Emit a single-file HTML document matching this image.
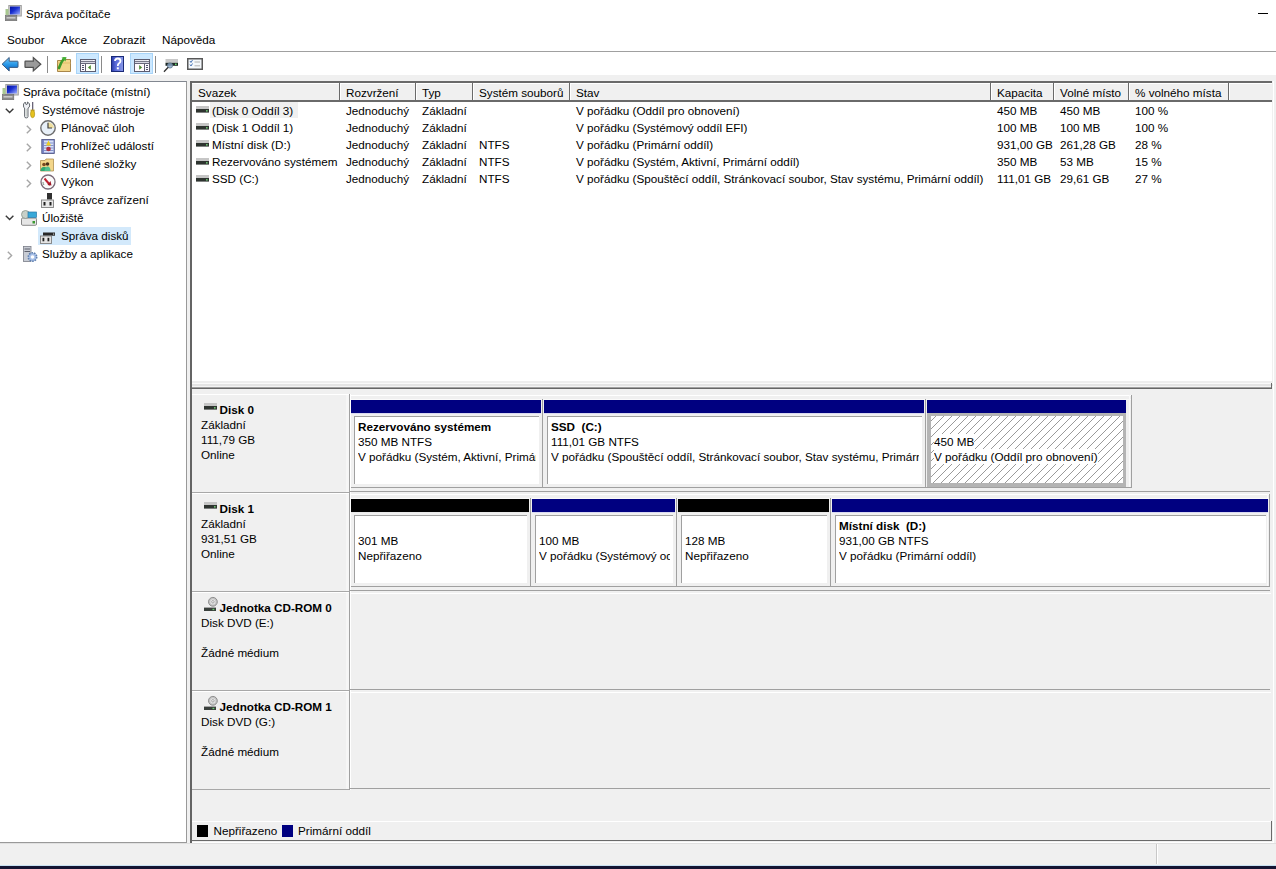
<!DOCTYPE html>
<html><head><meta charset="utf-8">
<style>
*{margin:0;padding:0;box-sizing:border-box}
html,body{width:1276px;height:869px;overflow:hidden}
body{background:#f0f0f0;font-family:"Liberation Sans",sans-serif;font-size:11.7px;color:#000;position:relative}
.a{position:absolute;white-space:nowrap;line-height:15px}
.b{position:absolute}
svg{position:absolute;overflow:visible}
</style></head><body>
<div class="b" style="left:0px;top:0px;width:1276px;height:75px;background:#fff"></div>
<svg style="left:5px;top:5px" width="17" height="17" viewBox="0 0 17 17"><rect x="3.8" y="0.5" width="12.5" height="10.5" fill="#d0d0d0" stroke="#a0a0a0" stroke-width="1"/>
<defs><linearGradient id="gs" x1="0" y1="0" x2="1" y2="1"><stop offset="0" stop-color="#0010a0"/><stop offset="0.45" stop-color="#1a30d0"/><stop offset="1" stop-color="#a0b0ff"/></linearGradient></defs>
<rect x="5" y="1.5" width="10" height="8" fill="url(#gs)"/>
<rect x="0.5" y="4" width="3" height="6" fill="#a8c890"/>
<rect x="0.3" y="10.5" width="11.5" height="5.2" fill="#8a8a8a" stroke="#6a6a6a" stroke-width="0.6"/>
<rect x="1.5" y="12" width="9" height="1.6" fill="#c8c8c8"/></svg>
<div class="a" style="left:26px;top:6.05px">Správa počítače</div>
<div class="b" style="left:1258px;top:13px;width:10px;height:1px;background:#000"></div>
<div class="a" style="left:7px;top:32.35px">Soubor</div>
<div class="a" style="left:61px;top:32.35px">Akce</div>
<div class="a" style="left:103px;top:32.35px">Zobrazit</div>
<div class="a" style="left:162px;top:32.35px">Nápověda</div>
<div class="b" style="left:0px;top:51px;width:1276px;height:1px;background:#a0a0a0"></div>
<svg style="left:0px;top:55px" width="20" height="18" viewBox="0 0 20 18"><defs><linearGradient id="gb" x1="0" y1="0" x2="0" y2="1"><stop offset="0" stop-color="#7cc8f8"/><stop offset="0.5" stop-color="#2a9ae8"/><stop offset="1" stop-color="#0a60c0"/></linearGradient></defs>
<path d="M2.1 9.2 L9.2 2.5 L9.2 6.2 L17.5 6.2 Q18 6.2 18 6.8 L18 11.8 Q18 12.4 17.5 12.4 L9.2 12.4 L9.2 16 Z" fill="url(#gb)" stroke="#3a5a80" stroke-width="1" stroke-linejoin="miter"/></svg>
<svg style="left:22px;top:55px" width="20" height="18" viewBox="0 0 20 18"><path d="M18.8 9.2 L11.3 2.5 L11.3 6.2 L3.4 6.2 Q3 6.2 3 6.8 L3 11.8 Q3 12.4 3.4 12.4 L11.3 12.4 L11.3 16 Z" fill="#9a9a9a" stroke="#505050" stroke-width="1.2" stroke-linejoin="miter"/></svg>
<div class="b" style="left:47px;top:56px;width:1px;height:17px;background:#8a8a8a"></div>
<div class="b" style="left:101px;top:56px;width:1px;height:17px;background:#8a8a8a"></div>
<div class="b" style="left:155px;top:56px;width:1px;height:17px;background:#8a8a8a"></div>
<svg style="left:56px;top:56px" width="17" height="17" viewBox="0 0 17 17"><path d="M1.5 4.5 L6 4.5 L7 3.5 L14.5 3.5 L14.5 15.5 L1.5 15.5 Z" fill="#f3d68a" stroke="#a9864a" stroke-width="1"/>
<path d="M1.5 7 L14.5 7" stroke="#e0bd6a" stroke-width="1"/>
<path d="M3 12 Q5 6 8 2.5" stroke="#3c9a2a" stroke-width="2.6" fill="none" stroke-linecap="round"/>
<path d="M5.5 1.5 L10.5 1 L9.5 5.5 Z" fill="#45b035"/></svg>
<div class="b" style="left:76px;top:53px;width:23px;height:21px;background:#cce8ff;border:1px solid #a8d4f8"></div>
<svg style="left:80px;top:59px" width="16" height="13" viewBox="0 0 16 13"><rect x="0" y="0" width="16" height="13" fill="#5c5c70"/>
<rect x="1" y="1" width="14" height="1.2" fill="#e8e8f0"/>
<rect x="13" y="1" width="1" height="1" fill="#fff"/>
<rect x="1" y="3" width="14" height="1.1" fill="#d8d8e4"/><rect x="1" y="5" width="4" height="7" fill="#fbf8ff"/>
<rect x="6" y="5" width="9" height="7" fill="#fcfffa"/>
<rect x="2" y="6" width="2" height="1" fill="#50506a"/><rect x="2" y="8" width="2" height="1" fill="#50506a"/><rect x="2" y="10" width="2" height="1" fill="#50506a"/>
<path d="M7.9 8.4 L10.8 6 L10.8 10.8 Z" fill="#4a8a30"/></svg>
<svg style="left:111px;top:56px" width="13" height="16" viewBox="0 0 13 16"><defs><linearGradient id="gh" x1="0" y1="0" x2="1" y2="0"><stop offset="0" stop-color="#2a3aa8"/><stop offset="0.35" stop-color="#5a6ad8"/><stop offset="1" stop-color="#8a9ae8"/></linearGradient></defs>
<rect x="0.5" y="0.5" width="12" height="15" fill="url(#gh)" stroke="#1a2a78" stroke-width="1"/>
<path d="M4 5 Q4 2.5 6.8 2.5 Q9.5 2.5 9.5 5 Q9.5 6.5 7.8 7.5 Q6.8 8.2 6.8 10" stroke="#fff" stroke-width="1.8" fill="none"/>
<rect x="5.8" y="11.3" width="2" height="2" fill="#fff"/></svg>
<div class="b" style="left:130px;top:53px;width:23px;height:21px;background:#cce8ff;border:1px solid #a8d4f8"></div>
<svg style="left:134px;top:59px" width="16" height="13" viewBox="0 0 16 13"><rect x="0" y="0" width="16" height="13" fill="#5c5c70"/>
<rect x="1" y="1" width="14" height="1.2" fill="#e8e8f0"/>
<rect x="13" y="1" width="1" height="1" fill="#fff"/>
<rect x="1" y="3" width="14" height="1.1" fill="#d8d8e4"/><rect x="1" y="5" width="9" height="7" fill="#fffafc"/>
<rect x="11" y="5" width="4" height="7" fill="#fbf8ff"/>
<rect x="12" y="6" width="2" height="1" fill="#50506a"/><rect x="12" y="8" width="2" height="1" fill="#50506a"/><rect x="12" y="10" width="2" height="1" fill="#50506a"/>
<path d="M8.1 8.4 L5.2 6 L5.2 10.8 Z" fill="#4a8a30"/></svg>
<svg style="left:163px;top:58px" width="17" height="15" viewBox="0 0 17 15"><rect x="2.5" y="1" width="12.5" height="3.8" fill="#c8c8c8"/>
<rect x="2.5" y="4.8" width="12.5" height="3" fill="#1e2a26"/>
<rect x="12" y="5.6" width="1.6" height="1.4" fill="#6ae070"/>
<circle cx="7" cy="7.5" r="2.6" fill="#8aa8c8" fill-opacity="0.8" stroke="#607890" stroke-width="0.8"/>
<path d="M5.2 9.3 L1 13.8" stroke="#303030" stroke-width="1.3"/></svg>
<svg style="left:187px;top:58px" width="16" height="12" viewBox="0 0 16 12"><rect x="0.75" y="0.75" width="14.5" height="10.5" fill="#f4f8fc" stroke="#585858" stroke-width="1.5"/>
<path d="M3 3 L4 4.5 L5.5 2" stroke="#3a6ab0" stroke-width="0.9" fill="none"/>
<path d="M3 6.5 L4 8 L5.5 5.5" stroke="#3a6ab0" stroke-width="0.9" fill="none"/>
<path d="M7.5 4 L13 4 M7.5 7.8 L13 7.8" stroke="#a0a0a0" stroke-width="0.8"/></svg>
<div class="b" style="left:0px;top:81px;width:187px;height:762px;background:#fff;border-top:1px solid #828790;border-right:1px solid #999;border-bottom:1px solid #999"></div>
<div class="b" style="left:38px;top:227px;width:93px;height:18px;background:#d3e9fb"></div>
<svg style="left:2px;top:84px" width="17" height="17" viewBox="0 0 17 17"><rect x="3.8" y="0.5" width="12.5" height="10.5" fill="#d0d0d0" stroke="#a0a0a0" stroke-width="1"/>
<defs><linearGradient id="gs" x1="0" y1="0" x2="1" y2="1"><stop offset="0" stop-color="#0010a0"/><stop offset="0.45" stop-color="#1a30d0"/><stop offset="1" stop-color="#a0b0ff"/></linearGradient></defs>
<rect x="5" y="1.5" width="10" height="8" fill="url(#gs)"/>
<rect x="0.5" y="4" width="3" height="6" fill="#a8c890"/>
<rect x="0.3" y="10.5" width="11.5" height="5.2" fill="#8a8a8a" stroke="#6a6a6a" stroke-width="0.6"/>
<rect x="1.5" y="12" width="9" height="1.6" fill="#c8c8c8"/></svg>
<svg style="left:5px;top:108px" width="10" height="6" viewBox="0 0 10 6"><path d="M0.8 0.8 L4.6 4.6 L8.4 0.8" stroke="#3a3a3a" stroke-width="1.4" fill="none"/></svg>
<svg style="left:20px;top:100px" width="20" height="20" viewBox="0 0 20 20"><path d="M3.6 7.2 Q2.6 3.4 5.2 2.1 L6.1 4.6 L7.6 3.8 L7.3 2 Q10.2 3 9.7 6 Q9.3 7.6 8 8.1 L8 16.6 Q8 17.9 6.3 17.9 Q4.6 17.9 4.6 16.6 L4.6 8.1 Q3.9 7.7 3.6 7.2 Z" fill="#eef0f4" stroke="#555a60" stroke-width="0.9"/>
<path d="M6.3 9 L6.3 16.5" stroke="#c8d0c8" stroke-width="1"/>
<rect x="12" y="2" width="1.3" height="8" fill="#6a6478"/>
<rect x="10.6" y="9.6" width="4" height="1.6" fill="#b89a28"/>
<ellipse cx="12.6" cy="14" rx="2.1" ry="3.7" fill="#e6c21e" stroke="#a88a10" stroke-width="0.6"/></svg>
<svg style="left:26px;top:125px" width="6" height="10" viewBox="0 0 6 10"><path d="M0.8 0.8 L4.6 4.5 L0.8 8.2" stroke="#a6a6a6" stroke-width="1.4" fill="none"/></svg>
<svg style="left:40px;top:120px" width="16" height="16" viewBox="0 0 16 16"><circle cx="8" cy="8" r="7.2" fill="#e8f0f8" stroke="#6e6e6e" stroke-width="1.4"/>
<path d="M8 8 L8 2.2 A5.8 5.8 0 0 1 13.8 8 Z" fill="#f0e0a0"/>
<path d="M8 2.8 L8 8 L12 8" stroke="#404040" stroke-width="1.2" fill="none"/></svg>
<svg style="left:26px;top:143px" width="6" height="10" viewBox="0 0 6 10"><path d="M0.8 0.8 L4.6 4.5 L0.8 8.2" stroke="#a6a6a6" stroke-width="1.4" fill="none"/></svg>
<svg style="left:41px;top:139px" width="14" height="15" viewBox="0 0 14 15"><rect x="0.8" y="0.5" width="12.5" height="14" fill="#7a86c8" stroke="#4a5080" stroke-width="0.8"/>
<rect x="3" y="1.5" width="9.5" height="12" fill="#d8e0f8"/>
<path d="M3 4 L12.5 4 M3 6.5 L12.5 6.5 M3 9 L12.5 9 M3 11.5 L12.5 11.5" stroke="#7080c0" stroke-width="0.8"/>
<path d="M7.5 1.5 L10 6.5 L5 6.5 Z" fill="#f0d020"/>
<circle cx="7.5" cy="10" r="2.3" fill="#b03040"/></svg>
<svg style="left:26px;top:161px" width="6" height="10" viewBox="0 0 6 10"><path d="M0.8 0.8 L4.6 4.5 L0.8 8.2" stroke="#a6a6a6" stroke-width="1.4" fill="none"/></svg>
<svg style="left:40px;top:158px" width="14" height="14" viewBox="0 0 14 14"><path d="M0.5 2.5 L5 2.5 L6 1 L13.5 1 L13.5 13 L0.5 13 Z" fill="#f3d68a" stroke="#b09050" stroke-width="0.8"/>
<circle cx="4" cy="6.5" r="1.8" fill="#7a4a20"/><circle cx="7.5" cy="6" r="1.8" fill="#4a3018"/>
<path d="M0.5 13 Q1 8.5 4 9 Q7 8.5 7.5 13 Z" fill="#30a870"/><path d="M4.5 13 Q5 8.5 8 8.5 Q10.5 9 10.5 13 Z" fill="#50c090"/></svg>
<svg style="left:26px;top:179px" width="6" height="10" viewBox="0 0 6 10"><path d="M0.8 0.8 L4.6 4.5 L0.8 8.2" stroke="#a6a6a6" stroke-width="1.4" fill="none"/></svg>
<svg style="left:40px;top:174px" width="16" height="16" viewBox="0 0 16 16"><circle cx="8" cy="8" r="7" fill="#fafafa" stroke="#7a6a78" stroke-width="1.3"/>
<path d="M4.5 4.5 L10 11" stroke="#c02030" stroke-width="2"/><path d="M10.5 7 L11.5 11.5 L7.5 11" fill="#a01828"/>
<path d="M3 8 Q3 10 4 11" stroke="#607060" stroke-width="0.8" fill="none"/></svg>
<svg style="left:41px;top:193px" width="13" height="15" viewBox="0 0 13 15"><rect x="6" y="0" width="5" height="6.5" fill="#303030"/>
<rect x="0.5" y="7" width="12" height="7.5" fill="#e8e8e8" stroke="#808080" stroke-width="0.9"/>
<rect x="2.5" y="9" width="2" height="3.5" fill="#202020"/><rect x="8.5" y="9" width="2" height="3.5" fill="#202020"/></svg>
<svg style="left:5px;top:215px" width="10" height="6" viewBox="0 0 10 6"><path d="M0.8 0.8 L4.6 4.6 L8.4 0.8" stroke="#3a3a3a" stroke-width="1.4" fill="none"/></svg>
<svg style="left:21px;top:210px" width="16" height="16" viewBox="0 0 16 16"><rect x="0.5" y="8" width="15" height="7.3" rx="1.2" fill="#e6e6e6" stroke="#7a7a7a" stroke-width="0.9"/>
<rect x="11.5" y="11" width="2.5" height="2.5" fill="#3a9a30"/>
<circle cx="4.5" cy="4.5" r="4" fill="#c8d0c8" stroke="#8a948a" stroke-width="0.8"/>
<rect x="7" y="2" width="8.5" height="5.5" fill="#38a8d8" stroke="#2a78a8" stroke-width="0.7"/></svg>
<svg style="left:40px;top:232px" width="16" height="12" viewBox="0 0 16 12"><rect x="3" y="0.5" width="12" height="3.2" fill="#282828"/>
<rect x="13" y="1.5" width="1.2" height="1.2" fill="#c0c0c0"/>
<rect x="0.5" y="4" width="11" height="7.5" fill="#e4e4e4" stroke="#808080" stroke-width="0.9"/>
<rect x="2.5" y="5.8" width="1.8" height="3.5" fill="#202020"/><rect x="7.5" y="5.8" width="1.8" height="3.5" fill="#202020"/></svg>
<svg style="left:7px;top:251px" width="6" height="10" viewBox="0 0 6 10"><path d="M0.8 0.8 L4.6 4.5 L0.8 8.2" stroke="#a6a6a6" stroke-width="1.4" fill="none"/></svg>
<svg style="left:23px;top:246px" width="15" height="16" viewBox="0 0 15 16"><rect x="0.5" y="0.5" width="7.5" height="15" fill="#c8ccd4" stroke="#7a7e88" stroke-width="0.8"/>
<path d="M1.5 3 L7 3 M1.5 5.5 L7 5.5" stroke="#505460" stroke-width="0.9"/>
<circle cx="9.5" cy="11" r="4.2" fill="#a8c0e8" stroke="#6080b0" stroke-width="1.6" stroke-dasharray="1.6 1"/>
<circle cx="9.5" cy="11" r="1.8" fill="#fff"/></svg>
<div class="a" style="left:23px;top:84.05px">Správa počítače (místní)</div>
<div class="a" style="left:42px;top:102.05px">Systémové nástroje</div>
<div class="a" style="left:61px;top:120.05px">Plánovač úloh</div>
<div class="a" style="left:61px;top:138.05px">Prohlížeč událostí</div>
<div class="a" style="left:61px;top:156.05px">Sdílené složky</div>
<div class="a" style="left:61px;top:174.05px">Výkon</div>
<div class="a" style="left:61px;top:192.05px">Správce zařízení</div>
<div class="a" style="left:42px;top:210.05px">Úložiště</div>
<div class="a" style="left:61px;top:228.05px">Správa disků</div>
<div class="a" style="left:42px;top:246.05px">Služby a aplikace</div>
<div class="b" style="left:190px;top:81px;width:2px;height:762px;background:#646464"></div>
<div class="b" style="left:192px;top:82px;width:1080px;height:299px;background:#fff"></div>
<div class="b" style="left:192px;top:83px;width:1080px;height:17px;background:#f0f0f0"></div>
<div class="b" style="left:192px;top:81px;width:1080px;height:2px;background:#6a6a6a"></div>
<div class="b" style="left:192px;top:83px;width:1080px;height:1px;background:#fff"></div>
<div class="b" style="left:192px;top:100px;width:1080px;height:2px;background:#6a6a6a"></div>
<div class="b" style="left:339px;top:83px;width:1px;height:17px;background:#6a6a6a"></div>
<div class="b" style="left:340px;top:83px;width:1px;height:17px;background:#fff"></div>
<div class="b" style="left:415px;top:83px;width:1px;height:17px;background:#6a6a6a"></div>
<div class="b" style="left:416px;top:83px;width:1px;height:17px;background:#fff"></div>
<div class="b" style="left:472px;top:83px;width:1px;height:17px;background:#6a6a6a"></div>
<div class="b" style="left:473px;top:83px;width:1px;height:17px;background:#fff"></div>
<div class="b" style="left:569px;top:83px;width:1px;height:17px;background:#6a6a6a"></div>
<div class="b" style="left:570px;top:83px;width:1px;height:17px;background:#fff"></div>
<div class="b" style="left:990px;top:83px;width:1px;height:17px;background:#6a6a6a"></div>
<div class="b" style="left:991px;top:83px;width:1px;height:17px;background:#fff"></div>
<div class="b" style="left:1053px;top:83px;width:1px;height:17px;background:#6a6a6a"></div>
<div class="b" style="left:1054px;top:83px;width:1px;height:17px;background:#fff"></div>
<div class="b" style="left:1128px;top:83px;width:1px;height:17px;background:#6a6a6a"></div>
<div class="b" style="left:1129px;top:83px;width:1px;height:17px;background:#fff"></div>
<div class="b" style="left:1228px;top:83px;width:1px;height:17px;background:#6a6a6a"></div>
<div class="b" style="left:1229px;top:83px;width:1px;height:17px;background:#fff"></div>
<div class="a" style="left:198px;top:85.05px">Svazek</div>
<div class="a" style="left:346px;top:85.05px">Rozvržení</div>
<div class="a" style="left:422px;top:85.05px">Typ</div>
<div class="a" style="left:479px;top:85.05px">Systém souborů</div>
<div class="a" style="left:576px;top:85.05px">Stav</div>
<div class="a" style="left:997px;top:85.05px">Kapacita</div>
<div class="a" style="left:1060px;top:85.05px">Volné místo</div>
<div class="a" style="left:1135px;top:85.05px">% volného místa</div>
<div class="b" style="left:210px;top:102px;width:88px;height:16px;background:#f0f0f0"></div>
<svg style="left:196px;top:106px" width="13" height="7" viewBox="0 0 13 7"><rect x="0" y="0" width="13" height="3" fill="#c6c6c6"/>
<rect x="0" y="3" width="13" height="3.6" fill="#2e3430"/>
<rect x="10" y="4.2" width="1.6" height="1.3" fill="#7ae080"/></svg>
<div class="a" style="left:212px;top:103.05px">(Disk 0 Oddíl 3)</div>
<div class="a" style="left:346px;top:103.05px">Jednoduchý</div>
<div class="a" style="left:422px;top:103.05px">Základní</div>
<div class="a" style="left:576px;top:103.05px">V pořádku (Oddíl pro obnovení)</div>
<div class="a" style="left:997px;top:103.05px">450 MB</div>
<div class="a" style="left:1060px;top:103.05px">450 MB</div>
<div class="a" style="left:1135px;top:103.05px">100 %</div>
<svg style="left:196px;top:123px" width="13" height="7" viewBox="0 0 13 7"><rect x="0" y="0" width="13" height="3" fill="#c6c6c6"/>
<rect x="0" y="3" width="13" height="3.6" fill="#2e3430"/>
<rect x="10" y="4.2" width="1.6" height="1.3" fill="#7ae080"/></svg>
<div class="a" style="left:212px;top:120.15px">(Disk 1 Oddíl 1)</div>
<div class="a" style="left:346px;top:120.15px">Jednoduchý</div>
<div class="a" style="left:422px;top:120.15px">Základní</div>
<div class="a" style="left:576px;top:120.15px">V pořádku (Systémový oddíl EFI)</div>
<div class="a" style="left:997px;top:120.15px">100 MB</div>
<div class="a" style="left:1060px;top:120.15px">100 MB</div>
<div class="a" style="left:1135px;top:120.15px">100 %</div>
<svg style="left:196px;top:140px" width="13" height="7" viewBox="0 0 13 7"><rect x="0" y="0" width="13" height="3" fill="#c6c6c6"/>
<rect x="0" y="3" width="13" height="3.6" fill="#2e3430"/>
<rect x="10" y="4.2" width="1.6" height="1.3" fill="#7ae080"/></svg>
<div class="a" style="left:212px;top:137.25px">Místní disk (D:)</div>
<div class="a" style="left:346px;top:137.25px">Jednoduchý</div>
<div class="a" style="left:422px;top:137.25px">Základní</div>
<div class="a" style="left:479px;top:137.25px">NTFS</div>
<div class="a" style="left:576px;top:137.25px">V pořádku (Primární oddíl)</div>
<div class="a" style="left:997px;top:137.25px">931,00 GB</div>
<div class="a" style="left:1060px;top:137.25px">261,28 GB</div>
<div class="a" style="left:1135px;top:137.25px">28 %</div>
<svg style="left:196px;top:158px" width="13" height="7" viewBox="0 0 13 7"><rect x="0" y="0" width="13" height="3" fill="#c6c6c6"/>
<rect x="0" y="3" width="13" height="3.6" fill="#2e3430"/>
<rect x="10" y="4.2" width="1.6" height="1.3" fill="#7ae080"/></svg>
<div class="a" style="left:212px;top:154.35px">Rezervováno systémem</div>
<div class="a" style="left:346px;top:154.35px">Jednoduchý</div>
<div class="a" style="left:422px;top:154.35px">Základní</div>
<div class="a" style="left:479px;top:154.35px">NTFS</div>
<div class="a" style="left:576px;top:154.35px">V pořádku (Systém, Aktivní, Primární oddíl)</div>
<div class="a" style="left:997px;top:154.35px">350 MB</div>
<div class="a" style="left:1060px;top:154.35px">53 MB</div>
<div class="a" style="left:1135px;top:154.35px">15 %</div>
<svg style="left:196px;top:175px" width="13" height="7" viewBox="0 0 13 7"><rect x="0" y="0" width="13" height="3" fill="#c6c6c6"/>
<rect x="0" y="3" width="13" height="3.6" fill="#2e3430"/>
<rect x="10" y="4.2" width="1.6" height="1.3" fill="#7ae080"/></svg>
<div class="a" style="left:212px;top:171.45px">SSD (C:)</div>
<div class="a" style="left:346px;top:171.45px">Jednoduchý</div>
<div class="a" style="left:422px;top:171.45px">Základní</div>
<div class="a" style="left:479px;top:171.45px">NTFS</div>
<div class="a" style="left:576px;top:171.45px">V pořádku (Spouštěcí oddíl, Stránkovací soubor, Stav systému, Primární oddíl)</div>
<div class="a" style="left:997px;top:171.45px">111,01 GB</div>
<div class="a" style="left:1060px;top:171.45px">29,61 GB</div>
<div class="a" style="left:1135px;top:171.45px">27 %</div>
<div class="b" style="left:192px;top:381px;width:1081px;height:2px;background:#eeeeee"></div>
<div class="b" style="left:192px;top:383px;width:1081px;height:1px;background:#fafafa"></div>
<div class="b" style="left:192px;top:384px;width:1081px;height:2px;background:#e4e4e4"></div>
<div class="b" style="left:192px;top:386px;width:1081px;height:1px;background:#f4f4f4"></div>
<div class="b" style="left:192px;top:388px;width:1080px;height:1px;background:#666666"></div>
<div class="b" style="left:192px;top:387px;width:1080px;height:1px;background:#a0a0a0"></div>
<div class="b" style="left:1271px;top:383px;width:1px;height:5px;background:#6a6a6a"></div>
<div class="b" style="left:192px;top:394px;width:157px;height:1px;background:#fff"></div>
<div class="b" style="left:192px;top:492px;width:157px;height:1px;background:#a8a8a8"></div>
<div class="b" style="left:346px;top:395px;width:3px;height:97px;background:#f6f6f6"></div>
<div class="b" style="left:349px;top:394px;width:1px;height:99px;background:#a0a0a0"></div>
<div class="b" style="left:350px;top:394px;width:1px;height:99px;background:#fff"></div>
<div class="b" style="left:351px;top:395px;width:780px;height:1px;background:#fff"></div>
<div class="b" style="left:351px;top:399px;width:780px;height:1px;background:#fafafa"></div>
<div class="b" style="left:351px;top:487px;width:780px;height:1px;background:#a0a0a0"></div>
<div class="b" style="left:1131px;top:395px;width:1px;height:93px;background:#a0a0a0"></div>
<div class="b" style="left:1129px;top:395px;width:1px;height:92px;background:#fafafa"></div>
<div class="b" style="left:351px;top:400px;width:190px;height:13px;background:#000080"></div>
<div class="b" style="left:351px;top:413px;width:190px;height:1px;background:#d8d8f0"></div>
<div class="b" style="left:354px;top:416px;width:185px;height:68px;background:#fff;border-top:1px solid #a0a0a0;border-left:1px solid #a0a0a0"></div>
<div class="a" style="left:358px;top:418.95px;font-weight:bold;max-width:178px;overflow:hidden">Rezervováno systémem</div>
<div class="a" style="left:358px;top:433.95px;max-width:178px;overflow:hidden">350 MB NTFS</div>
<div class="a" style="left:358px;top:448.95px;max-width:178px;overflow:hidden">V pořádku (Systém, Aktivní, Primární oddíl)</div>
<div class="b" style="left:542px;top:399px;width:1px;height:89px;background:#a0a0a0"></div>
<div class="b" style="left:544px;top:400px;width:380px;height:13px;background:#000080"></div>
<div class="b" style="left:544px;top:413px;width:380px;height:1px;background:#d8d8f0"></div>
<div class="b" style="left:547px;top:416px;width:375px;height:68px;background:#fff;border-top:1px solid #a0a0a0;border-left:1px solid #a0a0a0"></div>
<div class="a" style="left:551px;top:418.95px;font-weight:bold;max-width:368px;overflow:hidden">SSD&nbsp; (C:)</div>
<div class="a" style="left:551px;top:433.95px;max-width:368px;overflow:hidden">111,01 GB NTFS</div>
<div class="a" style="left:551px;top:448.95px;max-width:368px;overflow:hidden">V pořádku (Spouštěcí oddíl, Stránkovací soubor, Stav systému, Primární oddíl)</div>
<div class="b" style="left:925px;top:399px;width:1px;height:89px;background:#a0a0a0"></div>
<div class="b" style="left:927px;top:400px;width:199px;height:13px;background:#000080"></div>
<div class="b" style="left:927px;top:413px;width:199px;height:1px;background:#d8d8f0"></div>
<div class="b" style="left:927px;top:413px;width:199px;height:74px;background:#b4b4b4"></div>
<svg style="left:931px;top:416px" width="192" height="67"><defs><pattern id="hp" width="8" height="8" patternUnits="userSpaceOnUse" x="5" y="0"><path d="M-1 9 L9 -1" stroke="#9a9a9a" stroke-width="1"/></pattern></defs><rect width="192" height="67" fill="#fff"/><rect width="192" height="67" fill="url(#hp)"/></svg>
<div class="a" style="left:934px;top:433.95px;max-width:187px;overflow:hidden;background:#fff">450 MB</div>
<div class="a" style="left:934px;top:448.95px;max-width:187px;overflow:hidden;background:#fff">V pořádku (Oddíl pro obnovení)</div>
<div class="b" style="left:192px;top:493px;width:157px;height:1px;background:#fff"></div>
<div class="b" style="left:192px;top:591px;width:157px;height:1px;background:#a8a8a8"></div>
<div class="b" style="left:346px;top:494px;width:3px;height:97px;background:#f6f6f6"></div>
<div class="b" style="left:349px;top:493px;width:1px;height:99px;background:#a0a0a0"></div>
<div class="b" style="left:350px;top:493px;width:1px;height:99px;background:#fff"></div>
<div class="b" style="left:350px;top:491px;width:920px;height:1px;background:#a0a0a0"></div>
<div class="b" style="left:351px;top:494px;width:918px;height:1px;background:#fff"></div>
<div class="b" style="left:351px;top:498px;width:918px;height:1px;background:#fafafa"></div>
<div class="b" style="left:351px;top:586px;width:918px;height:1px;background:#a0a0a0"></div>
<div class="b" style="left:1269px;top:494px;width:1px;height:93px;background:#a0a0a0"></div>
<div class="b" style="left:1267px;top:494px;width:1px;height:92px;background:#fafafa"></div>
<div class="b" style="left:351px;top:499px;width:178px;height:13px;background:#000"></div>
<div class="b" style="left:351px;top:512px;width:178px;height:1px;background:#e8e8e8"></div>
<div class="b" style="left:354px;top:515px;width:173px;height:68px;background:#fff;border-top:1px solid #a0a0a0;border-left:1px solid #a0a0a0"></div>
<div class="a" style="left:358px;top:532.95px;max-width:166px;overflow:hidden">301 MB</div>
<div class="a" style="left:358px;top:547.95px;max-width:166px;overflow:hidden">Nepřiřazeno</div>
<div class="b" style="left:530px;top:498px;width:1px;height:89px;background:#a0a0a0"></div>
<div class="b" style="left:532px;top:499px;width:143px;height:13px;background:#000080"></div>
<div class="b" style="left:532px;top:512px;width:143px;height:1px;background:#d8d8f0"></div>
<div class="b" style="left:535px;top:515px;width:138px;height:68px;background:#fff;border-top:1px solid #a0a0a0;border-left:1px solid #a0a0a0"></div>
<div class="a" style="left:539px;top:532.95px;max-width:131px;overflow:hidden">100 MB</div>
<div class="a" style="left:539px;top:547.95px;max-width:131px;overflow:hidden">V pořádku (Systémový oddíl EFI)</div>
<div class="b" style="left:676px;top:498px;width:1px;height:89px;background:#a0a0a0"></div>
<div class="b" style="left:678px;top:499px;width:151px;height:13px;background:#000"></div>
<div class="b" style="left:678px;top:512px;width:151px;height:1px;background:#e8e8e8"></div>
<div class="b" style="left:681px;top:515px;width:146px;height:68px;background:#fff;border-top:1px solid #a0a0a0;border-left:1px solid #a0a0a0"></div>
<div class="a" style="left:685px;top:532.95px;max-width:139px;overflow:hidden">128 MB</div>
<div class="a" style="left:685px;top:547.95px;max-width:139px;overflow:hidden">Nepřiřazeno</div>
<div class="b" style="left:830px;top:498px;width:1px;height:89px;background:#a0a0a0"></div>
<div class="b" style="left:832px;top:499px;width:436px;height:13px;background:#000080"></div>
<div class="b" style="left:832px;top:512px;width:436px;height:1px;background:#d8d8f0"></div>
<div class="b" style="left:835px;top:515px;width:431px;height:68px;background:#fff;border-top:1px solid #a0a0a0;border-left:1px solid #a0a0a0"></div>
<div class="a" style="left:839px;top:517.95px;font-weight:bold;max-width:424px;overflow:hidden">Místní disk&nbsp; (D:)</div>
<div class="a" style="left:839px;top:532.95px;max-width:424px;overflow:hidden">931,00 GB NTFS</div>
<div class="a" style="left:839px;top:547.95px;max-width:424px;overflow:hidden">V pořádku (Primární oddíl)</div>
<div class="b" style="left:192px;top:592px;width:157px;height:1px;background:#fff"></div>
<div class="b" style="left:192px;top:690px;width:157px;height:1px;background:#a8a8a8"></div>
<div class="b" style="left:346px;top:593px;width:3px;height:97px;background:#f6f6f6"></div>
<div class="b" style="left:349px;top:592px;width:1px;height:99px;background:#a0a0a0"></div>
<div class="b" style="left:350px;top:592px;width:1px;height:99px;background:#fff"></div>
<div class="b" style="left:350px;top:590px;width:920px;height:1px;background:#a0a0a0"></div>
<div class="b" style="left:351px;top:593px;width:920px;height:1px;background:#fff"></div>
<div class="b" style="left:192px;top:691px;width:157px;height:1px;background:#fff"></div>
<div class="b" style="left:192px;top:789px;width:157px;height:1px;background:#a8a8a8"></div>
<div class="b" style="left:346px;top:692px;width:3px;height:97px;background:#f6f6f6"></div>
<div class="b" style="left:349px;top:691px;width:1px;height:99px;background:#a0a0a0"></div>
<div class="b" style="left:350px;top:691px;width:1px;height:99px;background:#fff"></div>
<div class="b" style="left:350px;top:689px;width:920px;height:1px;background:#a0a0a0"></div>
<div class="b" style="left:351px;top:692px;width:920px;height:1px;background:#fff"></div>
<div class="b" style="left:350px;top:788px;width:920px;height:1px;background:#a0a0a0"></div>
<svg style="left:204px;top:403px" width="13" height="7" viewBox="0 0 13 7"><rect x="0" y="0" width="13" height="3" fill="#c6c6c6"/>
<rect x="0" y="3" width="13" height="3.6" fill="#2e3430"/>
<rect x="10" y="4.2" width="1.6" height="1.3" fill="#7ae080"/></svg>
<svg style="left:204px;top:502px" width="13" height="7" viewBox="0 0 13 7"><rect x="0" y="0" width="13" height="3" fill="#c6c6c6"/>
<rect x="0" y="3" width="13" height="3.6" fill="#2e3430"/>
<rect x="10" y="4.2" width="1.6" height="1.3" fill="#7ae080"/></svg>
<svg style="left:204px;top:597px" width="14" height="15" viewBox="0 0 14 15"><rect x="0" y="11" width="12" height="3" fill="#3a403c"/>
<rect x="0" y="10" width="12" height="1" fill="#a8a8a8"/>
<circle cx="8.9" cy="4.8" r="4.4" fill="#c4c4c4" stroke="#8e8e8e" stroke-width="1"/>
<circle cx="8.9" cy="4.8" r="2.6" fill="#e4e4e4"/>
<circle cx="8.9" cy="4.8" r="1.2" fill="#fff" stroke="#909090" stroke-width="0.8"/>
<rect x="8.5" y="11.8" width="1.8" height="1.3" fill="#6ad070"/></svg>
<svg style="left:204px;top:696px" width="14" height="15" viewBox="0 0 14 15"><rect x="0" y="11" width="12" height="3" fill="#3a403c"/>
<rect x="0" y="10" width="12" height="1" fill="#a8a8a8"/>
<circle cx="8.9" cy="4.8" r="4.4" fill="#c4c4c4" stroke="#8e8e8e" stroke-width="1"/>
<circle cx="8.9" cy="4.8" r="2.6" fill="#e4e4e4"/>
<circle cx="8.9" cy="4.8" r="1.2" fill="#fff" stroke="#909090" stroke-width="0.8"/>
<rect x="8.5" y="11.8" width="1.8" height="1.3" fill="#6ad070"/></svg>
<div class="a" style="left:219.5px;top:401.95px;font-weight:bold">Disk 0</div>
<div class="a" style="left:201px;top:416.95px">Základní</div>
<div class="a" style="left:201px;top:431.95px">111,79 GB</div>
<div class="a" style="left:201px;top:446.95px">Online</div>
<div class="a" style="left:219.5px;top:501.35px;font-weight:bold">Disk 1</div>
<div class="a" style="left:201px;top:516.35px">Základní</div>
<div class="a" style="left:201px;top:531.35px">931,51 GB</div>
<div class="a" style="left:201px;top:546.35px">Online</div>
<div class="a" style="left:219.5px;top:599.65px;font-weight:bold">Jednotka CD-ROM 0</div>
<div class="a" style="left:201px;top:614.65px">Disk DVD (E:)</div>
<div class="a" style="left:201px;top:644.65px">Žádné médium</div>
<div class="a" style="left:219.5px;top:698.65px;font-weight:bold">Jednotka CD-ROM 1</div>
<div class="a" style="left:201px;top:713.65px">Disk DVD (G:)</div>
<div class="a" style="left:201px;top:743.65px">Žádné médium</div>
<div class="b" style="left:192px;top:821px;width:1080px;height:1px;background:#fff"></div>
<div class="b" style="left:192px;top:840px;width:1080px;height:1px;background:#6a6a6a"></div>
<div class="b" style="left:1271px;top:821px;width:1px;height:20px;background:#6a6a6a"></div>
<div class="b" style="left:197px;top:825px;width:11px;height:12px;background:#000"></div>
<div class="a" style="left:213.5px;top:823.25px">Nepřiřazeno</div>
<div class="b" style="left:282px;top:825px;width:11px;height:12px;background:#000080"></div>
<div class="a" style="left:298px;top:823.25px">Primární oddíl</div>
<div class="b" style="left:1273px;top:81px;width:1px;height:762px;background:#fff"></div>
<div class="b" style="left:192px;top:842px;width:1082px;height:1px;background:#fff"></div>
<div class="b" style="left:0px;top:843px;width:1276px;height:1px;background:#e0e0e0"></div>
<div class="b" style="left:1156px;top:844px;width:1px;height:20px;background:#c8c8c8"></div>
<div class="b" style="left:1157px;top:844px;width:1px;height:20px;background:#fff"></div>
<div class="b" style="left:0px;top:865px;width:1276px;height:1px;background:#c8e0f0"></div>
<div class="b" style="left:0px;top:866px;width:1276px;height:3px;background:#141432"></div>
</body></html>
